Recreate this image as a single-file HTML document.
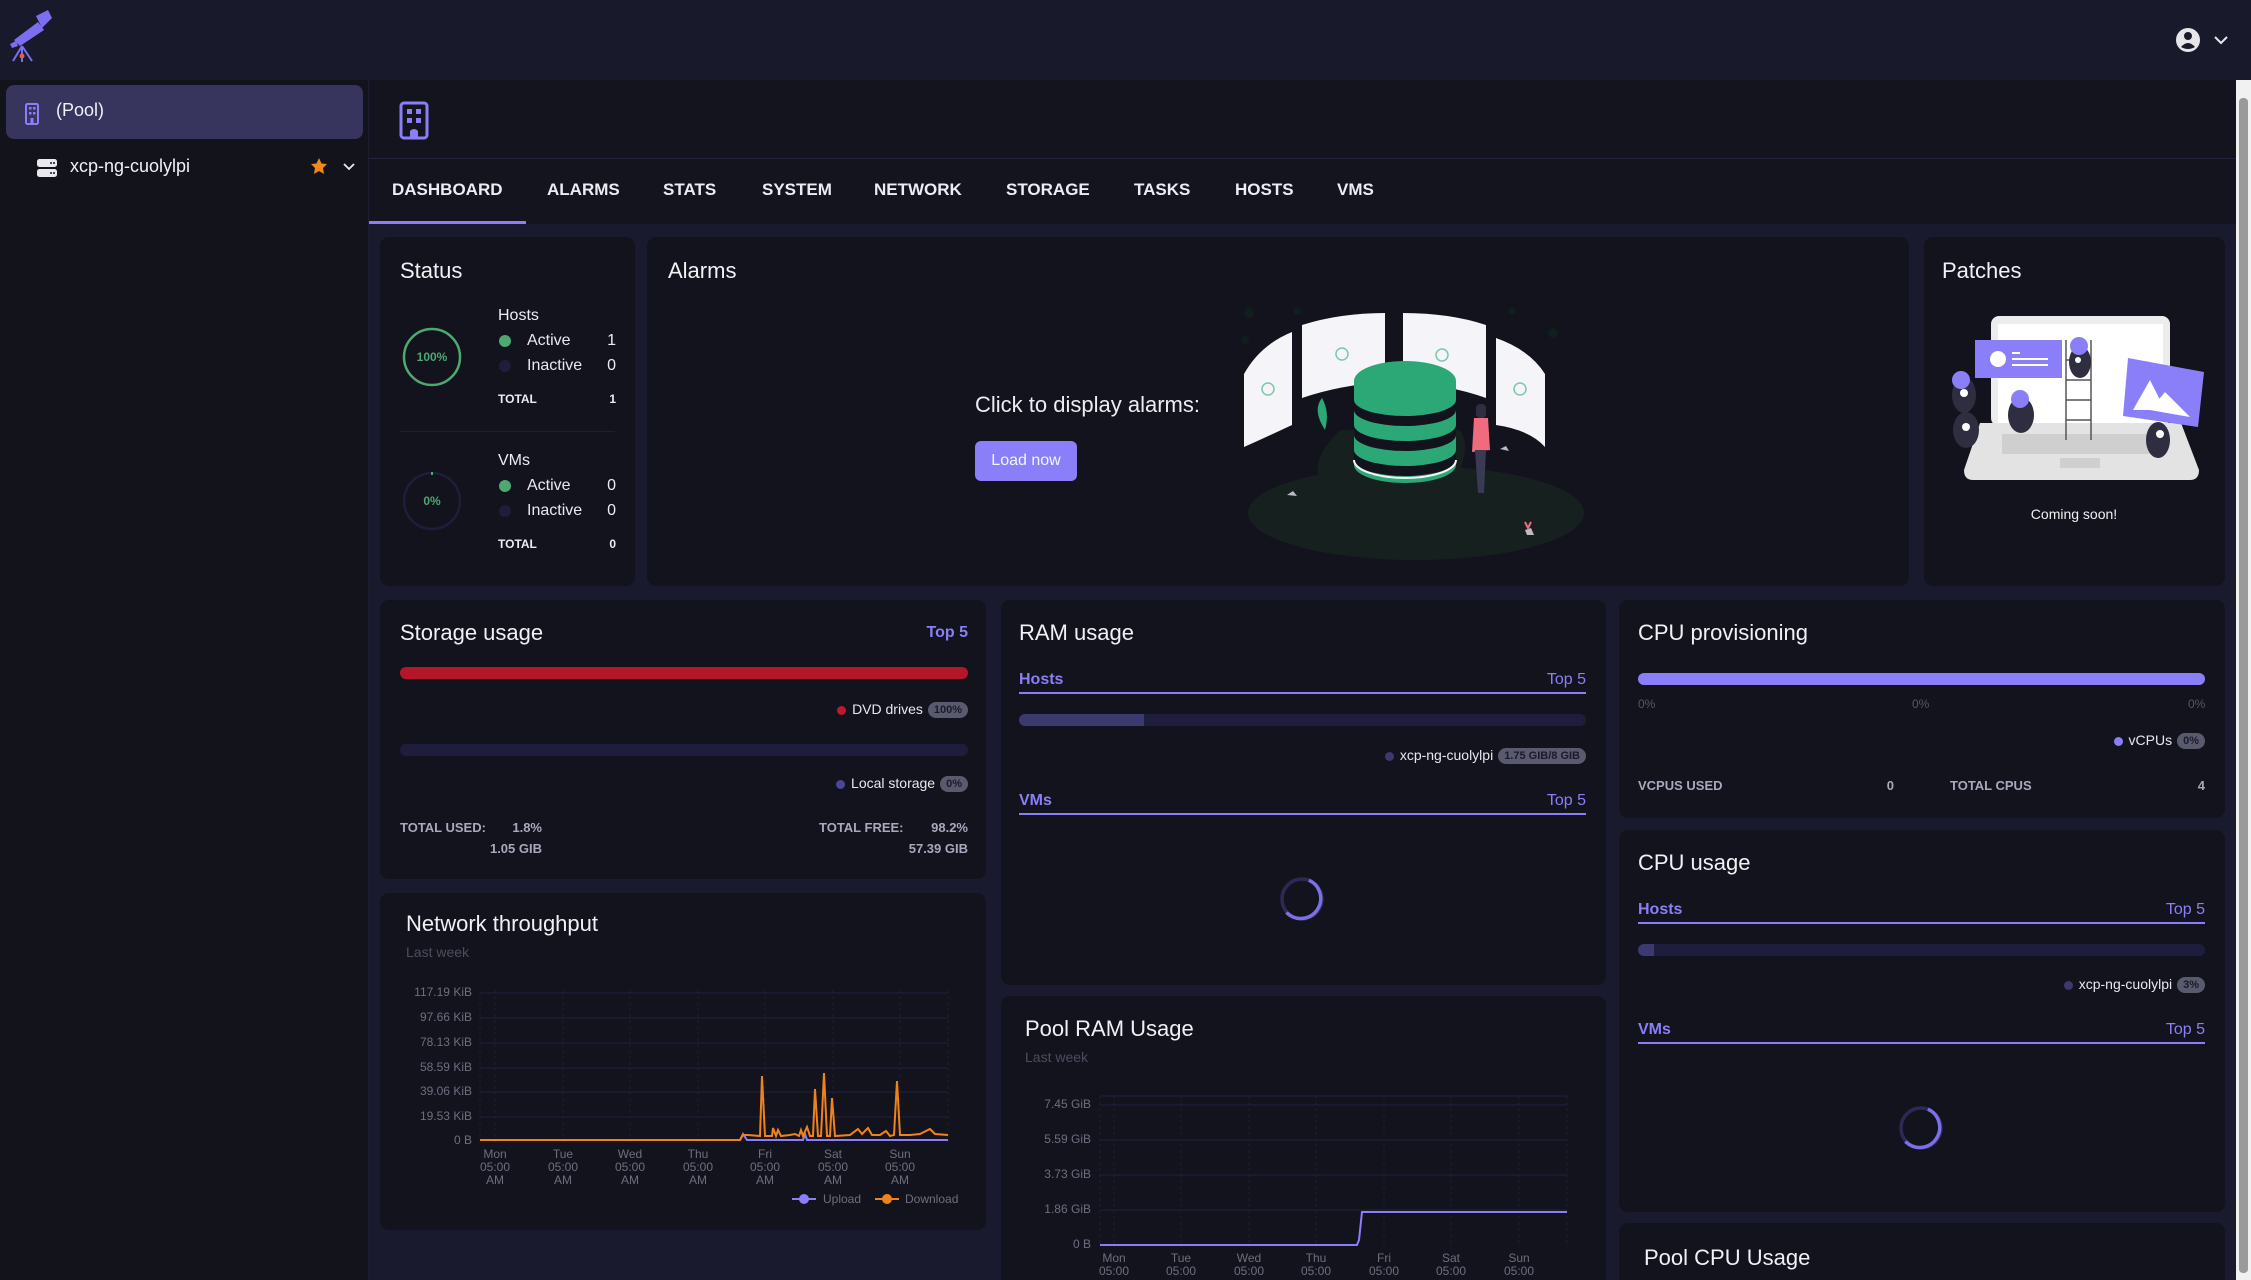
<!DOCTYPE html>
<html style="overflow:hidden;width:2251px;height:1280px"><head><meta charset="utf-8"><style>
*{margin:0;padding:0;box-sizing:border-box}
body{width:2251px;height:1280px;overflow:hidden;background:#1a1a2e;font-family:"Liberation Sans",sans-serif;color:#ececf3;position:relative}
.a{position:absolute;white-space:nowrap}
.card{position:absolute;background:#13131d;border-radius:9px}
.t{font-size:22px;color:#f0f0f5}
.p{color:#8a7ff9}
.tab{position:absolute;top:180px;font-size:17px;font-weight:bold;color:#ececf3}
.b{font-weight:bold}
.badge{display:inline-block;background:#5a5a6e;color:#1a1a28;border-radius:10px;padding:2px 6px;font-size:11px;font-weight:bold;margin-left:5px;vertical-align:middle}
.dot{display:inline-block;width:9px;height:9px;border-radius:50%;margin-right:6px;vertical-align:middle}
.lg{font-size:14px;color:#e8e8f0}
.tot{font-size:13px;font-weight:bold;color:#a9a9bd}
.ax{font-size:12px;color:#6e6e80;text-align:center;line-height:13px}
.yl{font-size:12px;color:#6e6e80;text-align:right;width:80px}
</style></head><body>
<div class="a" style="left:0;top:0;width:2251px;height:80px;background:#181a2c"></div>
<div class="a" style="left:0;top:80px;width:369px;height:1200px;background:#13131c;border-right:1px solid #1d1d30"></div>
<div class="a" style="left:369px;top:80px;width:1867px;height:144px;background:#14141f"></div>
<div class="a" style="left:369px;top:158px;width:1867px;height:1px;background:#22223a"></div>
<div class="a" style="left:369px;top:221px;width:157px;height:3px;background:#8a7ff9"></div>
<div class="a" style="left:2236px;top:80px;width:15px;height:1200px;background:#f1f1f1"></div>
<div class="a" style="left:2239px;top:98px;width:9px;height:1175px;background:#9a9a9a;border-radius:4px"></div>

<svg class="a" style="left:0;top:0" width="2251" height="1280">
<g fill="#7b6ef0" stroke="#7b6ef0">
<path d="M14 40 L38 22 L44 30 L20 46 Z" stroke="none"/>
<path d="M36 16 L48 10 L52 18 L42 28 Z" stroke="none"/>
<path d="M10 44 L16 41 L18 46 L12 48Z" stroke="none"/>
<line x1="22" y1="46" x2="22" y2="62" stroke-width="2"/>
<line x1="22" y1="46" x2="13" y2="61" stroke-width="2"/>
<line x1="22" y1="46" x2="32" y2="61" stroke-width="2"/>
</g>
<circle cx="22" cy="56" r="2.5" fill="#e06050"/>
<circle cx="2188" cy="40" r="12" fill="#e6e6ea"/>
<circle cx="2188" cy="36" r="4" fill="#181a2c"/>
<path d="M2181 47 Q2188 39 2195 47 Q2188 51 2181 47Z" fill="#181a2c"/>
<path d="M2215 37 L2221 43 L2227 37" stroke="#e6e6ea" stroke-width="2" fill="none"/>
<rect x="6" y="85" width="357" height="54" rx="8" fill="#37345e"/>
<g fill="none" stroke="#8a7ff9" stroke-width="2"><rect x="26" y="104" width="12" height="20" rx="1.5"/></g>
<g fill="#8a7ff9"><rect x="29" y="107" width="2.5" height="2.5"/><rect x="33" y="107" width="2.5" height="2.5"/><rect x="29" y="112" width="2.5" height="2.5"/><rect x="33" y="112" width="2.5" height="2.5"/><rect x="30.5" y="118" width="3" height="6"/></g>
<rect x="37" y="159" width="20" height="8" rx="2.5" fill="#e8e8ee"/><rect x="37" y="169" width="20" height="8" rx="2.5" fill="#e8e8ee"/>
<circle cx="51" cy="163" r="1" fill="#13131c"/><circle cx="54" cy="163" r="1" fill="#13131c"/><circle cx="51" cy="173" r="1" fill="#13131c"/><circle cx="54" cy="173" r="1" fill="#13131c"/>
<path d="M319 158 L321.5 163.5 L327 164 L323 168 L324 174 L319 171 L314 174 L315 168 L311 164 L316.5 163.5Z" fill="#f08a1c"/>
<path d="M344 164 L349 169 L354 164" stroke="#e8e8ee" stroke-width="1.8" fill="none"/>
<rect x="401" y="103" width="26" height="35" rx="3" fill="none" stroke="#8a7ff9" stroke-width="3"/>
<g fill="#8a7ff9"><rect x="407" y="109" width="5" height="5"/><rect x="416" y="109" width="5" height="5"/><rect x="407" y="118" width="5" height="5"/><rect x="416" y="118" width="5" height="5"/><path d="M410 138 L410 131 Q414 127 418 131 L418 138Z"/></g>
</svg>

<div class="a" style="left:56px;top:100px;font-size:18px;color:#f0f0f5">(Pool)</div>
<div class="a" style="left:70px;top:156px;font-size:18px;color:#f0f0f5">xcp-ng-cuolylpi</div>

<div class="tab p" style="left:392px">DASHBOARD</div>
<div class="tab" style="left:547px">ALARMS</div>
<div class="tab" style="left:663px">STATS</div>
<div class="tab" style="left:762px">SYSTEM</div>
<div class="tab" style="left:874px">NETWORK</div>
<div class="tab" style="left:1006px">STORAGE</div>
<div class="tab" style="left:1134px">TASKS</div>
<div class="tab" style="left:1235px">HOSTS</div>
<div class="tab" style="left:1337px">VMS</div>

<div class="card" style="left:380px;top:237px;width:255px;height:349px"></div>
<div class="card" style="left:647px;top:237px;width:1262px;height:349px"></div>
<div class="card" style="left:1924px;top:237px;width:301px;height:349px"></div>
<div class="card" style="left:380px;top:600px;width:606px;height:279px"></div>
<div class="card" style="left:1001px;top:600px;width:605px;height:385px"></div>
<div class="card" style="left:1619px;top:600px;width:606px;height:218px"></div>
<div class="card" style="left:380px;top:893px;width:606px;height:337px"></div>
<div class="card" style="left:1001px;top:996px;width:605px;height:284px;border-radius:9px 9px 0 0"></div>
<div class="card" style="left:1619px;top:830px;width:606px;height:382px"></div>
<div class="card" style="left:1619px;top:1223px;width:606px;height:57px;border-radius:9px 9px 0 0"></div>

<div class="a t" style="left:400px;top:258px">Status</div>
<div class="a" style="left:498px;top:307px;font-size:16px">Hosts</div>
<div class="a lg" style="left:499px;top:332px;font-size:16px"><span class="dot" style="background:#4ea872;width:12px;height:12px;margin-right:16px"></span>Active</div>
<div class="a lg" style="left:499px;top:357px;font-size:16px"><span class="dot" style="background:#1e1e3a;width:12px;height:12px;margin-right:16px"></span>Inactive</div>
<div class="a" style="left:604px;top:332px;font-size:16px;width:12px;text-align:right">1</div>
<div class="a" style="left:604px;top:357px;font-size:16px;width:12px;text-align:right">0</div>
<div class="a b" style="left:498px;top:392px;font-size:12px">TOTAL</div>
<div class="a b" style="left:604px;top:392px;font-size:12px;width:12px;text-align:right">1</div>
<div class="a" style="left:400px;top:431px;width:215px;height:1px;background:#1e1e36"></div>
<div class="a" style="left:498px;top:452px;font-size:16px">VMs</div>
<div class="a lg" style="left:499px;top:477px;font-size:16px"><span class="dot" style="background:#4ea872;width:12px;height:12px;margin-right:16px"></span>Active</div>
<div class="a lg" style="left:499px;top:502px;font-size:16px"><span class="dot" style="background:#1e1e3a;width:12px;height:12px;margin-right:16px"></span>Inactive</div>
<div class="a" style="left:604px;top:477px;font-size:16px;width:12px;text-align:right">0</div>
<div class="a" style="left:604px;top:502px;font-size:16px;width:12px;text-align:right">0</div>
<div class="a b" style="left:498px;top:537px;font-size:12px">TOTAL</div>
<div class="a b" style="left:604px;top:537px;font-size:12px;width:12px;text-align:right">0</div>
<div class="a b" style="left:402px;top:350px;width:60px;text-align:center;font-size:12px;color:#4ea872">100%</div>
<div class="a b" style="left:402px;top:494px;width:60px;text-align:center;font-size:12px;color:#4ea872">0%</div>

<div class="a t" style="left:668px;top:258px">Alarms</div>
<div class="a" style="left:975px;top:392px;font-size:22px">Click to display alarms:</div>
<div class="a" style="left:975px;top:441px;width:102px;height:40px;background:#8a7ff9;border-radius:6px;font-size:16px;color:#f5f5ff;text-align:center;line-height:40px">Load now</div>

<div class="a t" style="left:1942px;top:258px">Patches</div>
<div class="a" style="left:1994px;top:506px;width:160px;text-align:center;font-size:14px;color:#f0f0f5">Coming soon!</div>

<div class="a t" style="left:400px;top:620px">Storage usage</div>
<div class="a p b" style="left:900px;top:624px;width:68px;text-align:right;font-size:16px">Top 5</div>
<div class="a" style="left:400px;top:667px;width:568px;height:12px;background:#b5172a;border-radius:6px"></div>
<div class="a lg" style="left:700px;top:701px;width:268px;text-align:right"><span class="dot" style="background:#c0182c"></span>DVD drives<span class="badge">100%</span></div>
<div class="a" style="left:400px;top:744px;width:568px;height:12px;background:#1e1e3c;border-radius:6px"></div>
<div class="a lg" style="left:700px;top:775px;width:268px;text-align:right"><span class="dot" style="background:#4a4798"></span>Local storage<span class="badge">0%</span></div>
<div class="a tot" style="left:400px;top:820px">TOTAL USED:</div>
<div class="a tot" style="left:480px;top:820px;width:62px;text-align:right">1.8%</div>
<div class="a tot" style="left:462px;top:841px;width:80px;text-align:right">1.05 GIB</div>
<div class="a tot" style="left:819px;top:820px">TOTAL FREE:</div>
<div class="a tot" style="left:900px;top:820px;width:68px;text-align:right">98.2%</div>
<div class="a tot" style="left:868px;top:841px;width:100px;text-align:right">57.39 GIB</div>

<div class="a t" style="left:1019px;top:620px">RAM usage</div>
<div class="a p b" style="left:1019px;top:671px;font-size:16px">Hosts</div>
<div class="a p" style="left:1500px;top:671px;width:86px;text-align:right;font-size:16px">Top 5</div>
<div class="a" style="left:1019px;top:692px;width:567px;height:2px;background:#8a7ff9"></div>
<div class="a" style="left:1019px;top:714px;width:567px;height:12px;background:#1e1e3c;border-radius:6px;overflow:hidden"><div style="width:125px;height:12px;background:#3c3970"></div></div>
<div class="a lg" style="left:1280px;top:747px;width:306px;text-align:right"><span class="dot" style="background:#3c3970"></span>xcp-ng-cuolylpi<span class="badge">1.75 GIB/8 GIB</span></div>
<div class="a p b" style="left:1019px;top:792px;font-size:16px">VMs</div>
<div class="a p" style="left:1500px;top:792px;width:86px;text-align:right;font-size:16px">Top 5</div>
<div class="a" style="left:1019px;top:813px;width:567px;height:2px;background:#8a7ff9"></div>

<div class="a t" style="left:1638px;top:620px">CPU provisioning</div>
<div class="a" style="left:1638px;top:673px;width:567px;height:12px;background:#8a7ff9;border-radius:6px"></div>
<div class="a" style="left:1638px;top:697px;font-size:12px;color:#55556a">0%</div>
<div class="a" style="left:1912px;top:697px;font-size:12px;color:#55556a">0%</div>
<div class="a" style="left:2188px;top:697px;font-size:12px;color:#55556a">0%</div>
<div class="a lg" style="left:2000px;top:732px;width:205px;text-align:right"><span class="dot" style="background:#8a7ff9"></span>vCPUs<span class="badge">0%</span></div>
<div class="a tot" style="left:1638px;top:778px">VCPUS USED</div>
<div class="a tot" style="left:1880px;top:778px;width:14px;text-align:right">0</div>
<div class="a tot" style="left:1950px;top:778px">TOTAL CPUS</div>
<div class="a tot" style="left:2190px;top:778px;width:15px;text-align:right">4</div>

<div class="a t" style="left:1638px;top:850px">CPU usage</div>
<div class="a p b" style="left:1638px;top:901px;font-size:16px">Hosts</div>
<div class="a p" style="left:2119px;top:901px;width:86px;text-align:right;font-size:16px">Top 5</div>
<div class="a" style="left:1638px;top:922px;width:567px;height:2px;background:#8a7ff9"></div>
<div class="a" style="left:1638px;top:944px;width:567px;height:12px;background:#1e1e3c;border-radius:6px;overflow:hidden"><div style="width:16px;height:12px;background:#3c3970"></div></div>
<div class="a lg" style="left:1900px;top:976px;width:305px;text-align:right"><span class="dot" style="background:#3c3970"></span>xcp-ng-cuolylpi<span class="badge">3%</span></div>
<div class="a p b" style="left:1638px;top:1021px;font-size:16px">VMs</div>
<div class="a p" style="left:2119px;top:1021px;width:86px;text-align:right;font-size:16px">Top 5</div>
<div class="a" style="left:1638px;top:1042px;width:567px;height:2px;background:#8a7ff9"></div>
<div class="a t" style="left:1644px;top:1245px">Pool CPU Usage</div>

<div class="a t" style="left:406px;top:911px">Network throughput</div>
<div class="a" style="left:406px;top:944px;font-size:14px;color:#4c4c5e">Last week</div>
<div class="a yl" style="left:392px;top:985px">117.19 KiB</div>
<div class="a yl" style="left:392px;top:1010px">97.66 KiB</div>
<div class="a yl" style="left:392px;top:1035px">78.13 KiB</div>
<div class="a yl" style="left:392px;top:1060px">58.59 KiB</div>
<div class="a yl" style="left:392px;top:1084px">39.06 KiB</div>
<div class="a yl" style="left:392px;top:1109px">19.53 KiB</div>
<div class="a yl" style="left:392px;top:1133px">0 B</div>
<div class="a ax" style="left:470px;top:1148px;width:50px">Mon<br>05:00<br>AM</div>
<div class="a ax" style="left:538px;top:1148px;width:50px">Tue<br>05:00<br>AM</div>
<div class="a ax" style="left:605px;top:1148px;width:50px">Wed<br>05:00<br>AM</div>
<div class="a ax" style="left:673px;top:1148px;width:50px">Thu<br>05:00<br>AM</div>
<div class="a ax" style="left:740px;top:1148px;width:50px">Fri<br>05:00<br>AM</div>
<div class="a ax" style="left:808px;top:1148px;width:50px">Sat<br>05:00<br>AM</div>
<div class="a ax" style="left:875px;top:1148px;width:50px">Sun<br>05:00<br>AM</div>
<div class="a" style="left:823px;top:1192px;font-size:12px;color:#6e6e80">Upload</div>
<div class="a" style="left:905px;top:1192px;font-size:12px;color:#6e6e80">Download</div>

<div class="a t" style="left:1025px;top:1016px">Pool RAM Usage</div>
<div class="a" style="left:1025px;top:1049px;font-size:14px;color:#4c4c5e">Last week</div>
<div class="a yl" style="left:1011px;top:1097px">7.45 GiB</div>
<div class="a yl" style="left:1011px;top:1132px">5.59 GiB</div>
<div class="a yl" style="left:1011px;top:1167px">3.73 GiB</div>
<div class="a yl" style="left:1011px;top:1202px">1.86 GiB</div>
<div class="a yl" style="left:1011px;top:1237px">0 B</div>
<div class="a ax" style="left:1089px;top:1252px;width:50px">Mon<br>05:00</div>
<div class="a ax" style="left:1156px;top:1252px;width:50px">Tue<br>05:00</div>
<div class="a ax" style="left:1224px;top:1252px;width:50px">Wed<br>05:00</div>
<div class="a ax" style="left:1291px;top:1252px;width:50px">Thu<br>05:00</div>
<div class="a ax" style="left:1359px;top:1252px;width:50px">Fri<br>05:00</div>
<div class="a ax" style="left:1426px;top:1252px;width:50px">Sat<br>05:00</div>
<div class="a ax" style="left:1494px;top:1252px;width:50px">Sun<br>05:00</div>

<svg class="a" style="left:0;top:0" width="2251" height="1280">
<circle cx="432" cy="357" r="28" fill="none" stroke="#4ea872" stroke-width="2.5"/>
<circle cx="432" cy="501" r="28" fill="none" stroke="#1e1e3a" stroke-width="2.5"/>
<line x1="432" y1="472" x2="432" y2="475" stroke="#4ea872" stroke-width="2"/>
<g stroke="#20203e" stroke-width="1">
<line x1="480" y1="993" x2="948" y2="993"/><line x1="480" y1="1018" x2="948" y2="1018"/><line x1="480" y1="1043" x2="948" y2="1043"/><line x1="480" y1="1068" x2="948" y2="1068"/><line x1="480" y1="1092" x2="948" y2="1092"/><line x1="480" y1="1117" x2="948" y2="1117"/>
</g>
<g stroke="#1c1c34" stroke-dasharray="3 3"><line x1="495" y1="990" x2="495" y2="1142"/><line x1="563" y1="990" x2="563" y2="1142"/><line x1="630" y1="990" x2="630" y2="1142"/><line x1="698" y1="990" x2="698" y2="1142"/><line x1="765" y1="990" x2="765" y2="1142"/><line x1="833" y1="990" x2="833" y2="1142"/><line x1="900" y1="990" x2="900" y2="1142"/><line x1="480" y1="990" x2="480" y2="1142"/><line x1="948" y1="990" x2="948" y2="1142"/></g>
<polyline fill="none" stroke="#8a7ff9" stroke-width="2" points="480,1140 740,1140 743,1134 747,1140 803,1140 805,1134 807,1140 948,1140"/>
<polyline fill="none" stroke="#f0821c" stroke-width="2" points="480,1140 740,1140 743,1135 748,1135 760,1136 762,1076 765,1136 772,1136 773,1128 776,1136 778,1130 781,1136 790,1135 795,1134 799,1136 801,1130 803,1136 807,1127 810,1136 813,1136 815,1089 818,1136 821,1136 824,1073 827,1136 830,1136 832,1098 835,1136 850,1135 858,1129 862,1134 868,1128 872,1135 880,1135 886,1131 890,1136 894,1135 897,1081 900,1135 910,1135 920,1134 930,1129 935,1134 948,1135"/>
<line x1="792" y1="1199" x2="816" y2="1199" stroke="#8a7ff9" stroke-width="2"/><circle cx="804" cy="1199" r="5" fill="#8a7ff9"/>
<line x1="875" y1="1199" x2="899" y2="1199" stroke="#f0821c" stroke-width="2"/><circle cx="887" cy="1199" r="5" fill="#f0821c"/>
<g stroke="#20203e"><line x1="1100" y1="1096" x2="1567" y2="1096"/><line x1="1100" y1="1105" x2="1567" y2="1105"/><line x1="1100" y1="1140" x2="1567" y2="1140"/><line x1="1100" y1="1175" x2="1567" y2="1175"/><line x1="1100" y1="1210" x2="1567" y2="1210"/></g>
<g stroke="#1c1c34" stroke-dasharray="3 3"><line x1="1114" y1="1096" x2="1114" y2="1247"/><line x1="1181" y1="1096" x2="1181" y2="1247"/><line x1="1249" y1="1096" x2="1249" y2="1247"/><line x1="1316" y1="1096" x2="1316" y2="1247"/><line x1="1384" y1="1096" x2="1384" y2="1247"/><line x1="1451" y1="1096" x2="1451" y2="1247"/><line x1="1519" y1="1096" x2="1519" y2="1247"/><line x1="1100" y1="1096" x2="1100" y2="1247"/><line x1="1567" y1="1096" x2="1567" y2="1247"/></g>
<polyline fill="none" stroke="#8a7ff9" stroke-width="2" points="1100,1245 1357,1245 1359,1240 1362,1212 1567,1212"/>
<circle cx="1302" cy="899" r="20" fill="none" stroke="#2c2a55" stroke-width="3.5"/>
<path d="M1302 919 A20 20 0 1 1 1312 881" fill="none" stroke="#7b70e8" stroke-width="3.5" transform="rotate(200 1302 899)"/>
<circle cx="1921" cy="1128" r="20" fill="none" stroke="#2c2a55" stroke-width="3.5"/>
<path d="M1921 1148 A20 20 0 1 1 1931 1110" fill="none" stroke="#7b70e8" stroke-width="3.5" transform="rotate(200 1921 1128)"/>
<ellipse cx="1416" cy="513" rx="168" ry="47" fill="#16211f"/>
<path d="M1320 480 Q1370 470 1405 480 L1460 470 Q1470 445 1460 430 L1340 430 Q1310 460 1320 480Z" fill="#16211f"/>
<g fill="#0f1f1d"><circle cx="1249" cy="313" r="5"/><circle cx="1297" cy="311" r="4"/><circle cx="1245" cy="340" r="4"/><circle cx="1512" cy="311" r="4"/><circle cx="1553" cy="333" r="5"/></g>
<path d="M1244 374 Q1260 345 1292 332 L1292 425 Q1260 440 1244 447Z" fill="#f4f4f9"/>
<path d="M1302 325 Q1340 313 1385 313 L1385 382 Q1340 385 1302 398Z" fill="#f4f4f9"/>
<path d="M1403 313 Q1450 313 1486 325 L1486 398 Q1450 385 1403 382Z" fill="#f4f4f9"/>
<path d="M1496 338 Q1530 350 1545 374 L1545 447 Q1530 430 1496 425Z" fill="#f4f4f9"/>
<g fill="none" stroke="#7cc9a8" stroke-width="1.5"><circle cx="1268" cy="389" r="6"/><circle cx="1342" cy="354" r="6"/><circle cx="1442" cy="355" r="6"/><circle cx="1520" cy="389" r="6"/></g>
<path d="M1354 381 L1354 465 A51 18 0 0 0 1456 465 L1456 381Z" fill="#2ca776"/>
<g fill="#13131d"><path d="M1354 400 A51 16 0 0 0 1456 400 L1456 410 A51 16 0 0 1 1354 410Z"/><path d="M1354 425 A51 16 0 0 0 1456 425 L1456 435 A51 16 0 0 1 1354 435Z"/><path d="M1354 450 A51 16 0 0 0 1456 450 L1456 460 A51 16 0 0 1 1354 460Z"/></g>
<ellipse cx="1405" cy="381" rx="51" ry="20" fill="#2ca776"/>
<path d="M1354 460 A51 18 0 0 0 1456 460" fill="none" stroke="#f4f4f9" stroke-width="2"/>
<path d="M1322 398 Q1312 410 1325 430 Q1330 412 1322 398Z" fill="#2ca776"/>
<rect x="1476" y="404" width="10" height="14" rx="4" fill="#2f2e41"/>
<path d="M1474 418 L1488 418 L1490 450 L1472 452Z" fill="#f06b7b"/>
<path d="M1475 450 L1486 450 L1484 493 L1478 493Z" fill="#3a3a55"/>
<path d="M1287 495 l6 -4 l4 5 z M1500 449 l6 -3 l3 5z M1525 530 l6 -2 l3 7 l-7 0z" fill="#bbbbc4"/>
<path d="M1525 522 l3 6 l3 -6" stroke="#f06b7b" fill="none" stroke-width="2"/>
<rect x="1991" y="316" width="179" height="110" rx="8" fill="#ececec"/>
<rect x="1998" y="324" width="165" height="100" fill="#ffffff"/>
<path d="M1980 423 L2181 423 L2199 470 Q2199 480 2190 480 L1973 480 Q1964 480 1964 470Z" fill="#e3e3e3"/>
<rect x="2002" y="434" width="150" height="20" fill="#cfcfcf"/>
<rect x="2060" y="458" width="40" height="10" fill="#cfcfcf"/>
<rect x="1975" y="340" width="87" height="38" fill="#8a7ff9"/>
<circle cx="1998" cy="359" r="8" fill="#fff"/>
<g stroke="#fff" stroke-width="2"><line x1="2012" y1="353" x2="2020" y2="353"/><line x1="2012" y1="359" x2="2048" y2="359"/><line x1="2012" y1="365" x2="2048" y2="365"/></g>
<path d="M2128 358 L2204 372 L2198 427 L2123 416Z" fill="#8a7ff9"/>
<path d="M2133 410 L2150 380 L2165 410Z M2150 410 L2165 392 L2190 417Z" fill="#fff"/>
<g stroke="#555" stroke-width="1.5"><line x1="2066" y1="340" x2="2066" y2="440"/><line x1="2091" y1="340" x2="2091" y2="440"/><line x1="2066" y1="360" x2="2091" y2="360"/><line x1="2066" y1="380" x2="2091" y2="380"/><line x1="2066" y1="400" x2="2091" y2="400"/><line x1="2066" y1="420" x2="2091" y2="420"/></g>
<g fill="#2f2e41"><ellipse cx="1964" cy="395" rx="12" ry="18"/><ellipse cx="1966" cy="430" rx="13" ry="18"/><ellipse cx="2021" cy="415" rx="13" ry="18"/><ellipse cx="2080" cy="362" rx="11" ry="16"/><ellipse cx="2158" cy="440" rx="12" ry="18"/></g>
<g fill="#8a7ff9"><circle cx="1961" cy="380" r="9"/><circle cx="2020" cy="399" r="9"/><circle cx="2079" cy="346" r="9"/></g>
<g fill="#fff"><circle cx="1964" cy="393" r="4"/><circle cx="1966" cy="427" r="4"/><circle cx="2160" cy="434" r="4"/><circle cx="2078" cy="360" r="3"/></g>
</svg>
</body></html>
